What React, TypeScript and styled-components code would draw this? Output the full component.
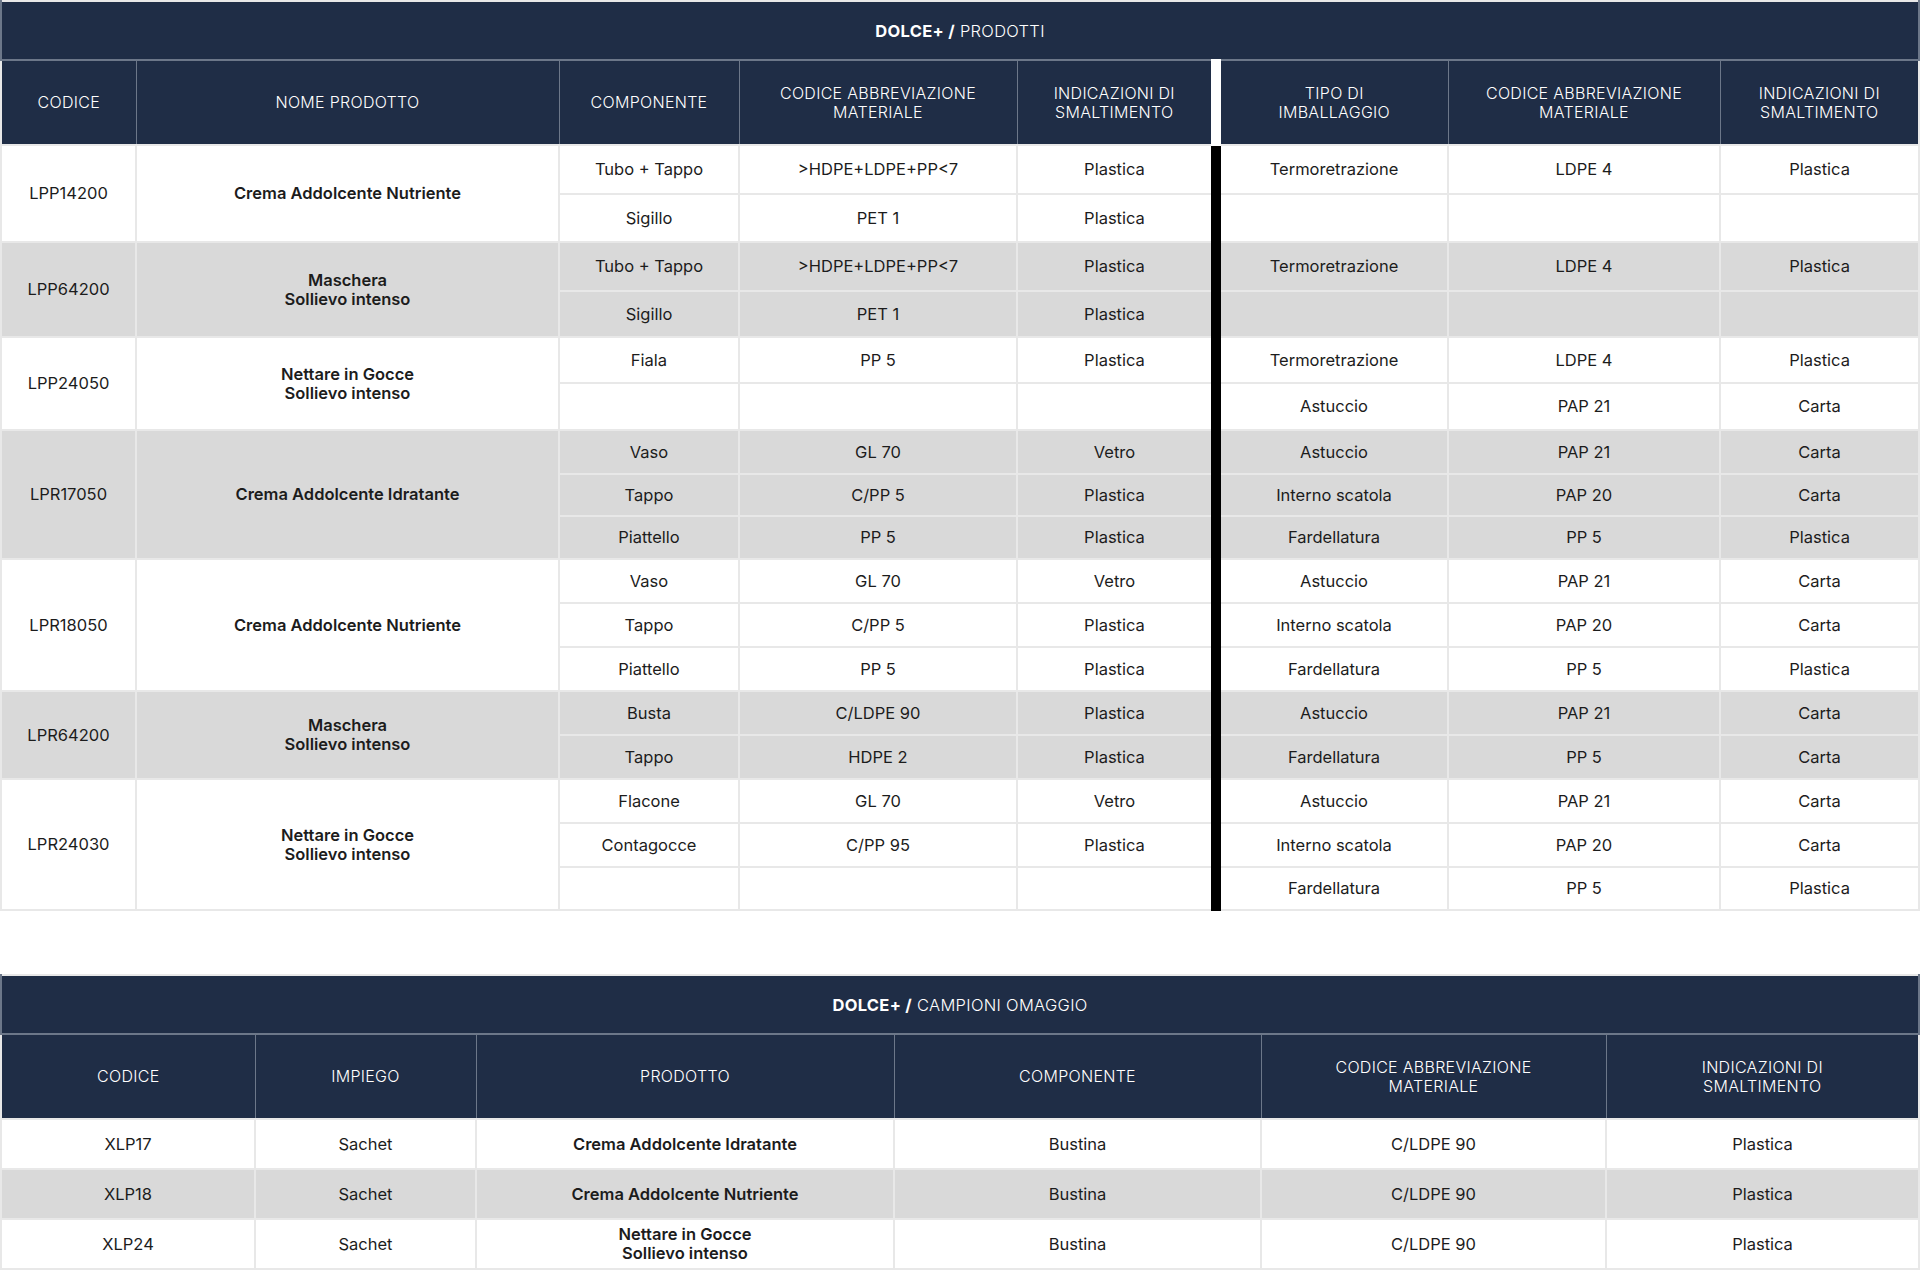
import styled, { createGlobalStyle } from "styled-components";

const GlobalStyle = createGlobalStyle`
  html, body {
    margin: 0;
    padding: 0;
    background: #ffffff;
  }
  body {
    font-family: Inter, "Liberation Sans", sans-serif;
    color: #1c1c1c;
  }
`;

const navy = "#1f2d46";
const headLine = "#6c7789";
const bodyLine = "#e8e8e8";
const shade = "#d9d9d9";

type SubRow = [string, string, string, string, string, string];

interface Group {
  code: string;
  name: string[];
  shaded: boolean;
  heights: number[];
  rows: SubRow[];
}

const groups: Group[] = [
  {
    code: "LPP14200",
    name: ["Crema Addolcente Nutriente"],
    shaded: false,
    heights: [49, 48],
    rows: [
      ["Tubo + Tappo", ">HDPE+LDPE+PP<7", "Plastica", "Termoretrazione", "LDPE 4", "Plastica"],
      ["Sigillo", "PET 1", "Plastica", "", "", ""],
    ],
  },
  {
    code: "LPP64200",
    name: ["Maschera", "Sollievo intenso"],
    shaded: true,
    heights: [49, 46],
    rows: [
      ["Tubo + Tappo", ">HDPE+LDPE+PP<7", "Plastica", "Termoretrazione", "LDPE 4", "Plastica"],
      ["Sigillo", "PET 1", "Plastica", "", "", ""],
    ],
  },
  {
    code: "LPP24050",
    name: ["Nettare in Gocce", "Sollievo intenso"],
    shaded: false,
    heights: [46, 47],
    rows: [
      ["Fiala", "PP 5", "Plastica", "Termoretrazione", "LDPE 4", "Plastica"],
      ["", "", "", "Astuccio", "PAP 21", "Carta"],
    ],
  },
  {
    code: "LPR17050",
    name: ["Crema Addolcente Idratante"],
    shaded: true,
    heights: [44, 42, 43],
    rows: [
      ["Vaso", "GL 70", "Vetro", "Astuccio", "PAP 21", "Carta"],
      ["Tappo", "C/PP 5", "Plastica", "Interno scatola", "PAP 20", "Carta"],
      ["Piattello", "PP 5", "Plastica", "Fardellatura", "PP 5", "Plastica"],
    ],
  },
  {
    code: "LPR18050",
    name: ["Crema Addolcente Nutriente"],
    shaded: false,
    heights: [44, 44, 44],
    rows: [
      ["Vaso", "GL 70", "Vetro", "Astuccio", "PAP 21", "Carta"],
      ["Tappo", "C/PP 5", "Plastica", "Interno scatola", "PAP 20", "Carta"],
      ["Piattello", "PP 5", "Plastica", "Fardellatura", "PP 5", "Plastica"],
    ],
  },
  {
    code: "LPR64200",
    name: ["Maschera", "Sollievo intenso"],
    shaded: true,
    heights: [44, 44],
    rows: [
      ["Busta", "C/LDPE 90", "Plastica", "Astuccio", "PAP 21", "Carta"],
      ["Tappo", "HDPE 2", "Plastica", "Fardellatura", "PP 5", "Carta"],
    ],
  },
  {
    code: "LPR24030",
    name: ["Nettare in Gocce", "Sollievo intenso"],
    shaded: false,
    heights: [44, 44, 43],
    rows: [
      ["Flacone", "GL 70", "Vetro", "Astuccio", "PAP 21", "Carta"],
      ["Contagocce", "C/PP 95", "Plastica", "Interno scatola", "PAP 20", "Carta"],
      ["", "", "", "Fardellatura", "PP 5", "Plastica"],
    ],
  },
];

const samples = [
  { code: "XLP17", use: "Sachet", name: ["Crema Addolcente Idratante"], shaded: false },
  { code: "XLP18", use: "Sachet", name: ["Crema Addolcente Nutriente"], shaded: true },
  { code: "XLP24", use: "Sachet", name: ["Nettare in Gocce", "Sollievo intenso"], shaded: false },
];

const topCols = [135, 423, 180, 278, 199, 232, 272, 199];
const bottomCols = [254, 221, 418, 367, 345, 313];

export default function App() {
  return (
    <Page>
      <GlobalStyle />
      <Table>
        <colgroup>
          {topCols.map((w, i) => (
            <col key={i} style={{ width: w }} />
          ))}
        </colgroup>
        <thead>
          <tr>
            <TitleCell colSpan={8}>
              <strong>DOLCE+ /</strong> PRODOTTI
            </TitleCell>
          </tr>
          <tr>
            <HeadCell>CODICE</HeadCell>
            <HeadCell>NOME PRODOTTO</HeadCell>
            <HeadCell>COMPONENTE</HeadCell>
            <HeadCell>CODICE ABBREVIAZIONE<br />MATERIALE</HeadCell>
            <HeadCell>INDICAZIONI DI<br />SMALTIMENTO</HeadCell>
            <HeadCell $split>TIPO DI<br />IMBALLAGGIO</HeadCell>
            <HeadCell>CODICE ABBREVIAZIONE<br />MATERIALE</HeadCell>
            <HeadCell>INDICAZIONI DI<br />SMALTIMENTO</HeadCell>
          </tr>
        </thead>
        <tbody>
          {groups.map((g) =>
            g.rows.map((r, i) => (
              <Row key={g.code + i} $shaded={g.shaded} $h={g.heights[i]}>
                {i === 0 && (
                  <>
                    <Cell rowSpan={g.rows.length}>{g.code}</Cell>
                    <Cell rowSpan={g.rows.length} $bold>
                      {g.name.map((n, k) => (
                        <Line key={k}>{n}</Line>
                      ))}
                    </Cell>
                  </>
                )}
                {r.map((v, k) => (
                  <Cell key={k} $split={k === 3}>
                    {v}
                  </Cell>
                ))}
              </Row>
            ))
          )}
        </tbody>
      </Table>

      <Table>
        <colgroup>
          {bottomCols.map((w, i) => (
            <col key={i} style={{ width: w }} />
          ))}
        </colgroup>
        <thead>
          <tr>
            <TitleCell colSpan={6}>
              <strong>DOLCE+ /</strong> CAMPIONI OMAGGIO
            </TitleCell>
          </tr>
          <tr>
            <HeadCell>CODICE</HeadCell>
            <HeadCell>IMPIEGO</HeadCell>
            <HeadCell>PRODOTTO</HeadCell>
            <HeadCell>COMPONENTE</HeadCell>
            <HeadCell>CODICE ABBREVIAZIONE<br />MATERIALE</HeadCell>
            <HeadCell>INDICAZIONI DI<br />SMALTIMENTO</HeadCell>
          </tr>
        </thead>
        <tbody>
          {samples.map((s) => (
            <Row key={s.code} $shaded={s.shaded} $h={50}>
              <Cell>{s.code}</Cell>
              <Cell>{s.use}</Cell>
              <Cell $bold>
                {s.name.map((n, k) => (
                  <Line key={k}>{n}</Line>
                ))}
              </Cell>
              <Cell>Bustina</Cell>
              <Cell>C/LDPE 90</Cell>
              <Cell>Plastica</Cell>
            </Row>
          ))}
        </tbody>
      </Table>
    </Page>
  );
}

const Page = styled.div`
  width: 1918px;
  display: flex;
  flex-direction: column;
  gap: 63px;
`;

const Table = styled.table`
  width: 1918px;
  table-layout: fixed;
  border-collapse: collapse;
  font-size: 16.5px;
  text-align: center;
  border: 2px solid ${bodyLine};
`;

const TitleCell = styled.th`
  height: 57px;
  padding: 0;
  background: ${navy};
  color: #ffffff;
  font-weight: 300;
  font-size: 16.5px;
  letter-spacing: 0.3px;
  border: 2px solid ${headLine};
  border-top: 1px solid ${headLine};

  strong {
    font-weight: 700;
  }
`;

const HeadCell = styled.th<{ $split?: boolean }>`
  height: 83px;
  padding: 0 8px;
  background: ${navy};
  color: #ffffff;
  font-weight: 300;
  font-size: 16px;
  line-height: 19px;
  letter-spacing: 0.3px;
  border: 1px solid ${headLine};
  border-left: ${(p) => (p.$split ? "10px solid #ffffff" : `1px solid ${headLine}`)};
`;

const Row = styled.tr<{ $shaded: boolean; $h: number }>`
  height: ${(p) => p.$h}px;
  background: ${(p) => (p.$shaded ? shade : "#ffffff")};
`;

const Cell = styled.td<{ $bold?: boolean; $split?: boolean }>`
  padding: 0 8px;
  vertical-align: middle;
  font-weight: ${(p) => (p.$bold ? 600 : 400)};
  line-height: 19px;
  color: #1c1c1c;
  border: 2px solid ${bodyLine};
  border-left: ${(p) => (p.$split ? "10px solid #000000" : `2px solid ${bodyLine}`)};
`;

const Line = styled.span`
  display: block;
`;
